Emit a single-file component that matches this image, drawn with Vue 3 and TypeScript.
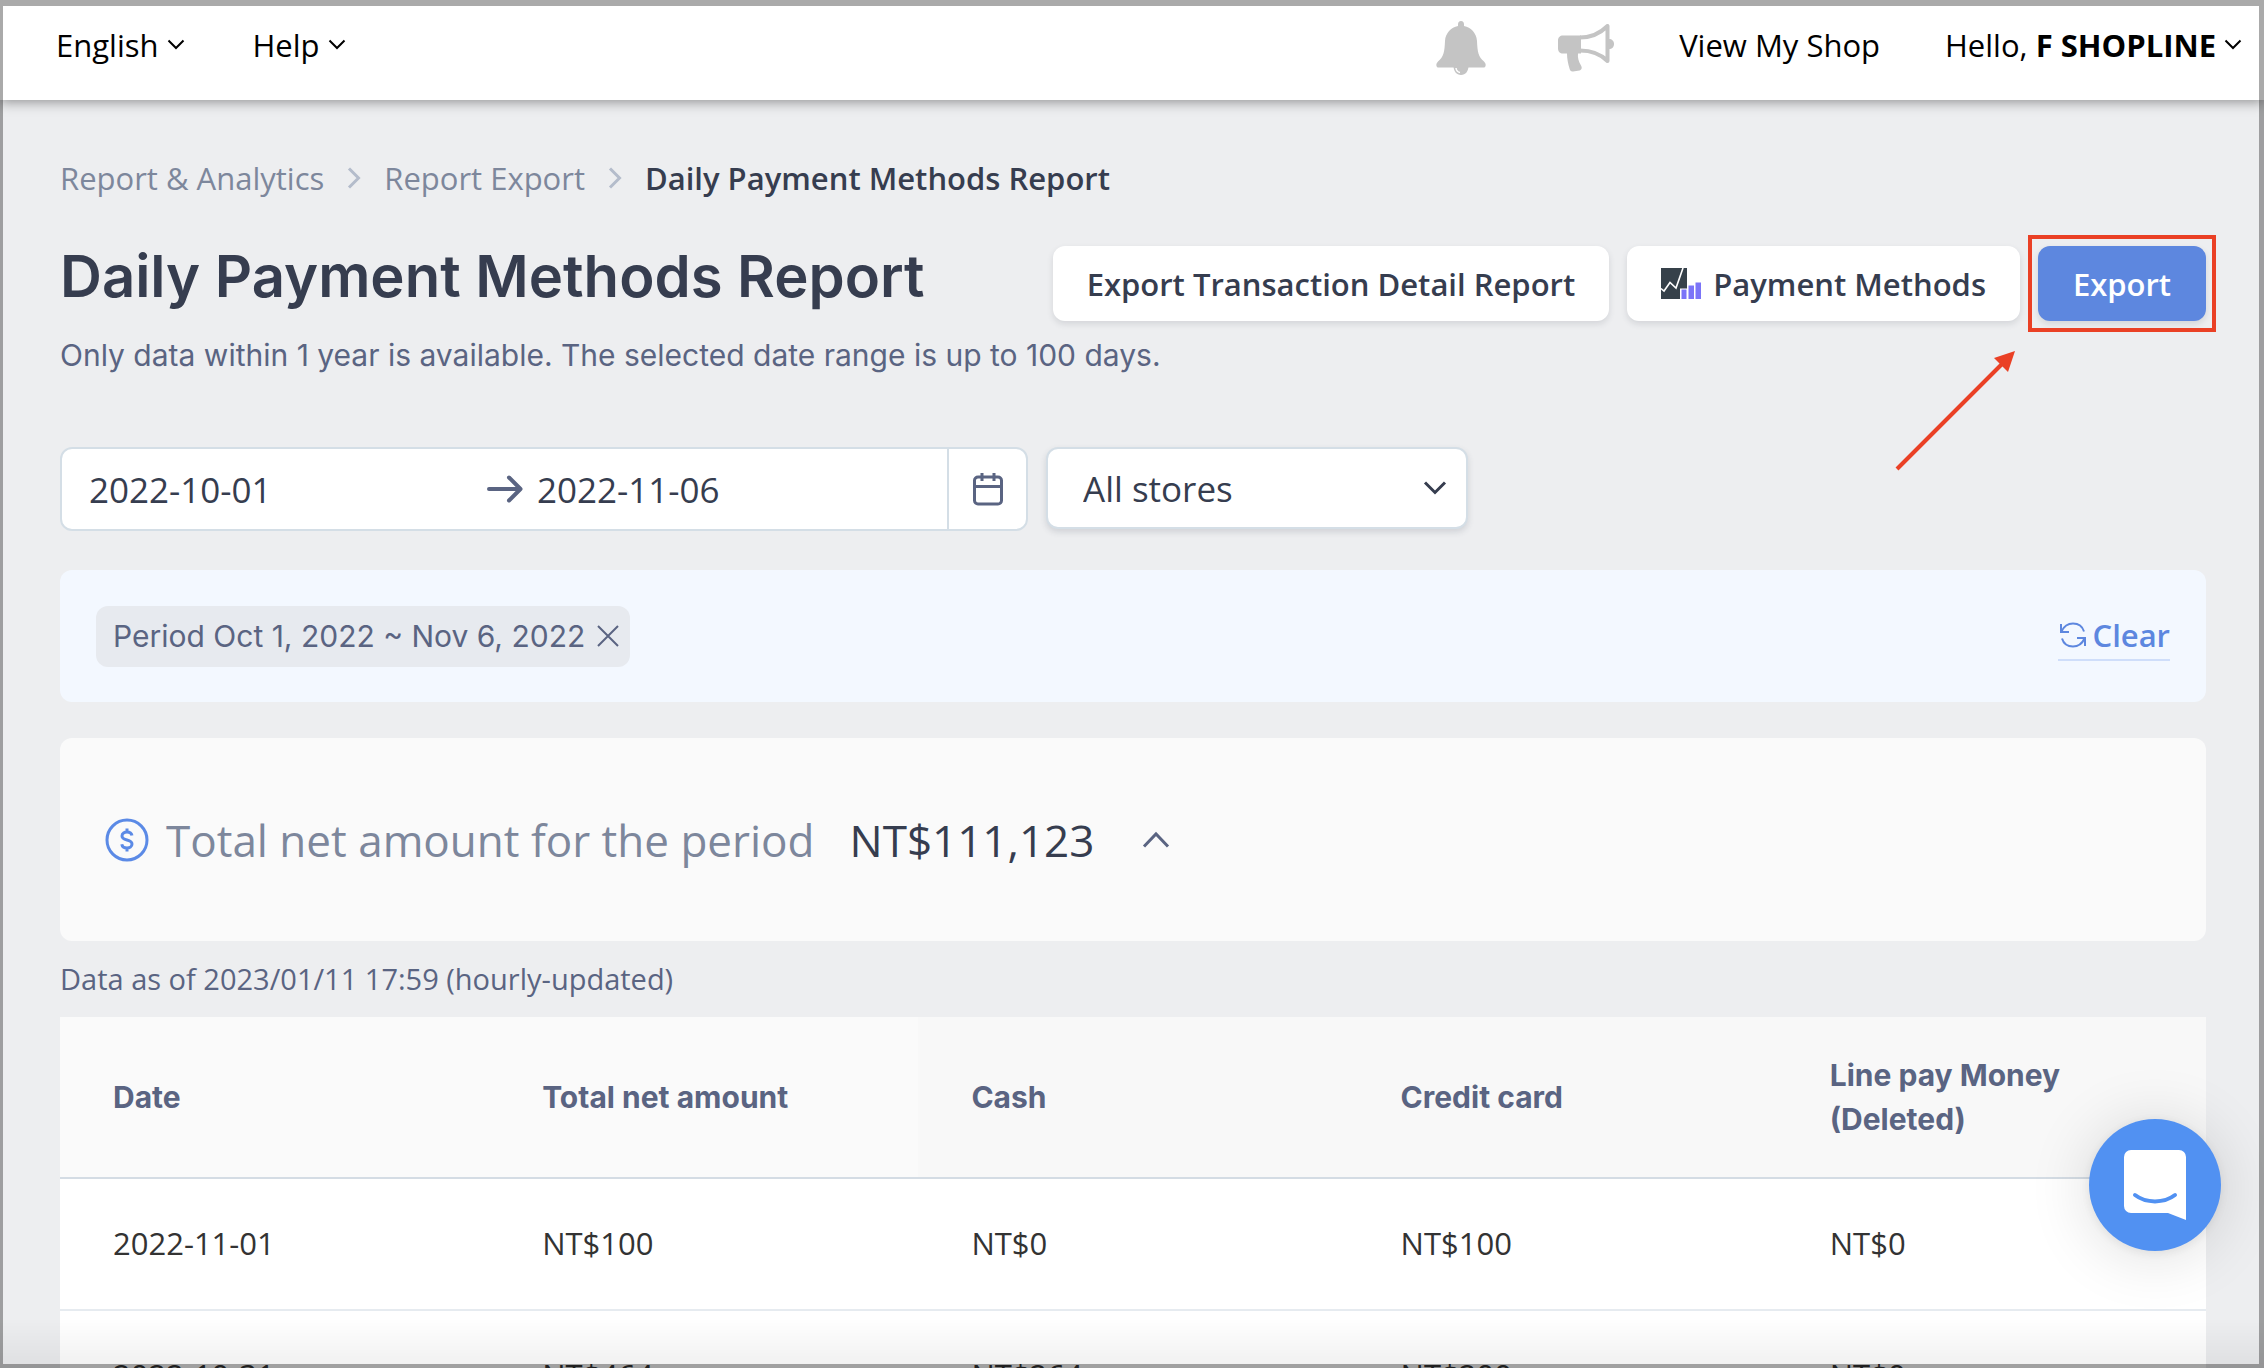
<script setup lang="ts">
import { ref } from 'vue'

interface Row {
  date: string
  total: string
  cash: string
  credit: string
  linePay: string
}

const startDate = ref('2022-10-01')
const endDate = ref('2022-11-06')
const store = ref('all')

const columns = ['Date', 'Total net amount', 'Cash', 'Credit card', 'Line pay Money (Deleted)']

const rows: Row[] = [
  { date: '2022-11-01', total: 'NT$100', cash: 'NT$0', credit: 'NT$100', linePay: 'NT$0' },
  { date: '2022-10-31', total: 'NT$464', cash: 'NT$264', credit: 'NT$200', linePay: 'NT$0' },
]
</script>

<template>
  <div class="page">
    <header class="topbar">
      <nav class="topbar-group left">
        <button type="button" class="menu">
          English
          <svg class="caret" viewBox="0 0 18 12"><path d="M1.5 1.5 9 9l7.5-7.5" /></svg>
        </button>
        <button type="button" class="menu">
          Help
          <svg class="caret" viewBox="0 0 18 12"><path d="M1.5 1.5 9 9l7.5-7.5" /></svg>
        </button>
      </nav>
      <div class="topbar-group">
        <div class="alerts">
          <button type="button" aria-label="Notifications">
            <svg class="bell" viewBox="0 0 50 54">
              <path d="M25 0c2 0 3 1.5 3 3.5V5c7 1.5 12.5 7 13 15 .4 11 1.5 16 7 20.5 1.5 1.5 2 3 1.5 4.5-.3 1-1 1.5-2 1.5h-45c-1 0-1.700-.5-2-1.500-.5-1.500 0-3 1.500-4.500C7.500 36 8.600 31 9 20 9.500 12 15 6.500 22 5V3.500C22 1.500 23 0 25 0z" />
              <path d="M17.500 45h15c0 5-3 9-7.500 9s-7.500-4-7.500-9z" />
              <path d="M20 47c.3 2.500 1.500 4 4 4.500" fill="none" stroke="#fff" stroke-width="1.500" />
            </svg>
          </button>
          <button type="button" aria-label="Announcements">
            <svg class="horn" viewBox="0 0 56 48">
              <path d="M5 11.500h18v18H20c-.5 4 .5 8 3 12 1.500 2.500.5 4.500-1.500 5l-6.500 1c-2 .2-3-.8-3.500-3-1.500-5-2.500-10-2.500-15H5c-3 0-5-2-5-5v-8c0-3 2-5 5-5z" />
              <path d="M22 13.500c12 0 20-4 27.500-11.500v35C42 29.500 34 26.500 22 26.500" fill="none" stroke="#c4c4c4" stroke-width="4" stroke-linejoin="round" />
              <path d="M51 15c3 0 5 2 5 5s-2 5-5 5z" />
            </svg>
          </button>
        </div>
        <a href="#">View My Shop</a>
        <button type="button" class="menu account">
          <span>Hello, <b>F SHOPLINE</b></span>
          <svg class="caret" viewBox="0 0 18 12"><path d="M1.5 1.5 9 9l7.5-7.5" /></svg>
        </button>
      </div>
    </header>

    <main class="content">
      <nav class="breadcrumb" aria-label="Breadcrumb">
        <a href="#">Report &amp; Analytics</a>
        <svg viewBox="0 0 14 22"><path d="M2 1.5 11.5 11 2 20.5" /></svg>
        <a href="#">Report Export</a>
        <svg viewBox="0 0 14 22"><path d="M2 1.5 11.5 11 2 20.5" /></svg>
        <strong>Daily Payment Methods Report</strong>
      </nav>

      <section class="heading">
        <div>
          <h1>Daily Payment Methods Report</h1>
          <p>Only data within 1 year is available. The selected date range is up to 100 days.</p>
        </div>
        <div class="actions">
          <button type="button" class="btn">Export Transaction Detail Report</button>
          <button type="button" class="btn">
            <svg class="chart" viewBox="0 0 40 31">
              <rect width="26" height="31" fill="#36414a" />
              <path d="M0 20.5 3 23l6-8.500 6 5.500L22 0" fill="none" stroke="#fff" stroke-width="1.600" />
              <path d="M19 31V20.500h7V16h7v-3h7v18z" fill="#fff" />
              <path d="M20.500 21.500h5V31h-5zM27.500 17.500H33V31h-5.500zM34.500 14.500H40V31h-5.500z" fill="#7b74f8" />
            </svg>
            Payment Methods
          </button>
          <div class="highlight">
            <button type="button" class="btn primary">Export</button>
            <span class="highlight-box"></span>
            <svg class="highlight-arrow" viewBox="0 0 124 124">
              <path d="M4 120 112 12" stroke="#ea4025" stroke-width="4" />
              <path d="M122 2 101 9l14 14z" fill="#ea4025" />
            </svg>
          </div>
        </div>
      </section>

      <section class="filters">
        <div class="range">
          <input v-model="startDate" type="text" class="start" aria-label="Start date" />
          <svg class="to" viewBox="0 0 36 28"><path d="M2 14h31M22 2.5 33.5 14 22 25.5" /></svg>
          <input v-model="endDate" type="text" class="end" aria-label="End date" />
          <button type="button" class="calendar" aria-label="Open calendar">
            <svg viewBox="0 0 30 34">
              <path d="M5 5h20a3.500 3.500 0 0 1 3.500 3.500v20A3.500 3.500 0 0 1 25 32H5a3.500 3.500 0 0 1-3.500-3.500v-20A3.500 3.500 0 0 1 5 5zM1.500 14.500h27M9 1v8M21 1v8" />
            </svg>
          </button>
        </div>
        <div class="store">
          <select v-model="store" aria-label="Store">
            <option value="all">All stores</option>
          </select>
          <svg viewBox="0 0 24 16"><path d="M2 2.5 12 12.5 22 2.5" /></svg>
        </div>
      </section>

      <section class="applied">
        <span class="chip">
          Period Oct 1, 2022 ~ Nov 6, 2022
          <button type="button" aria-label="Remove period filter">
            <svg viewBox="0 0 22 22"><path d="M1 1l20 20M21 1 1 21" /></svg>
          </button>
        </span>
        <button type="button" class="clear">
          <svg viewBox="0 0 28 28">
            <path d="M2 3v8h8M2.500 10.500C5 5 9 2.500 14 2.500c5.500 0 9.500 3 11 8M26 25v-8h-8M25.500 17.500C23 23 19 25.500 14 25.500c-5.500 0-9.500-3-11-8" />
          </svg>
          Clear
        </button>
      </section>

      <section class="summary">
        <svg class="coin" viewBox="0 0 44 44">
          <circle cx="22" cy="22" r="20" />
          <path d="M27 17.500c-.5-2.500-2.500-3.500-5-3.500s-5 1.200-5 4c0 5.500 10 2.500 10 8 0 2.800-2.500 4-5 4s-4.800-1.200-5.200-3.800M22 10.500V14M22 30v3.500" />
        </svg>
        <span class="summary-label">Total net amount for the period</span>
        <span class="summary-value">NT$111,123</span>
        <button type="button" aria-label="Collapse summary">
          <svg viewBox="0 0 28 18"><path d="M2 15.500 14 3l12 12.500" /></svg>
        </button>
      </section>

      <p class="updated">Data as of 2023/01/11 17:59 (hourly-updated)</p>

      <table>
        <thead>
          <tr>
            <th v-for="name in columns" :key="name" scope="col">{{ name }}</th>
          </tr>
        </thead>
        <tbody>
          <tr v-for="row in rows" :key="row.date">
            <td>{{ row.date }}</td>
            <td>{{ row.total }}</td>
            <td>{{ row.cash }}</td>
            <td>{{ row.credit }}</td>
            <td>{{ row.linePay }}</td>
          </tr>
        </tbody>
      </table>
    </main>

    <div class="fade"></div>
    <button type="button" class="chat" aria-label="Open chat">
      <svg viewBox="0 0 62 70">
        <path d="M7 0h48a7 7 0 0 1 7 7v63L44 63H7a7 7 0 0 1-7-7V7a7 7 0 0 1 7-7z" fill="#fff" />
        <path d="M11 45c11 8.500 29 8.500 40 0" fill="none" stroke="#5191f2" stroke-width="4" stroke-linecap="round" />
      </svg>
    </button>
    <div class="frame"></div>
  </div>
</template>

<style>
body {
  margin: 0;
  background: #edeef0;
}
</style>

<style scoped>
.page {
  height: 100vh;
  overflow: hidden;
  background: #edeef0;
  font-family: 'Open Sans', 'Noto Sans', sans-serif;
  font-size: 31px;
  color: #363d4f;
}
button {
  padding: 0;
  border: 0;
  background: none;
  font: inherit;
  color: inherit;
  cursor: pointer;
}
a {
  color: inherit;
  text-decoration: none;
}
svg {
  display: block;
  flex: none;
  fill: none;
}
.topbar {
  position: relative;
  display: flex;
  justify-content: space-between;
  box-sizing: border-box;
  height: 100px;
  padding: 6px 22px 16px 56px;
  background: #fff;
  color: #000;
  box-shadow: 0 2px 12px rgba(0, 0, 0, 0.4);
}
.topbar-group {
  display: flex;
  align-items: center;
  gap: 65px;
}
.topbar-group.left {
  gap: 68px;
}
.menu {
  display: flex;
  align-items: center;
  gap: 8px;
}
.account b {
  font-weight: 700;
}
.caret {
  width: 18px;
  height: 12px;
  stroke: #000;
  stroke-width: 2;
}
.alerts {
  display: flex;
  align-items: center;
  gap: 72px;
  padding-top: 5px;
}
.bell {
  width: 50px;
  height: 54px;
  fill: #c4c4c4;
}
.horn {
  width: 56px;
  height: 48px;
  fill: #c4c4c4;
}
.content {
  padding: 56px 58px 0 60px;
}
.breadcrumb {
  display: flex;
  align-items: center;
  gap: 23px;
  line-height: 44px;
  color: #7d879c;
}
.breadcrumb svg {
  width: 14px;
  height: 22px;
  stroke: #b4bccb;
  stroke-width: 3;
}
.breadcrumb strong {
  font-weight: 600;
  color: #363d4f;
}
.heading {
  display: flex;
  justify-content: space-between;
  margin-top: 40px;
}
h1 {
  margin: 0;
  font: 600 58px/72px Inter, sans-serif;
  white-space: nowrap;
}
.heading p {
  margin: 21px 0 0;
  font: 400 30px/44px Inter, sans-serif;
  color: #5a6482;
  white-space: nowrap;
}
.heading > div:first-child {
  width: 0;
}
.actions {
  display: flex;
  align-items: flex-start;
  gap: 18px;
  padding-top: 6px;
}
.btn {
  display: flex;
  align-items: center;
  justify-content: center;
  gap: 12px;
  height: 75px;
  padding: 0 34px;
  border-radius: 12px;
  background: #fff;
  font-weight: 600;
  white-space: nowrap;
  box-shadow: 0 3px 6px rgba(54, 61, 79, 0.14);
}
.primary {
  min-width: 168px;
  background: #5d87df;
  color: #fff;
}
.chart {
  width: 40px;
  height: 31px;
}
.highlight {
  position: relative;
}
.highlight-box {
  position: absolute;
  inset: -11px -10px;
  border: 4px solid #ea4025;
  pointer-events: none;
}
.highlight-arrow {
  position: absolute;
  top: 103px;
  left: -145px;
  width: 124px;
  height: 124px;
}
.filters {
  display: flex;
  align-items: flex-start;
  gap: 18px;
  margin-top: 70px;
}
.range {
  display: flex;
  align-items: center;
  box-sizing: border-box;
  width: 968px;
  height: 84px;
  border: 2px solid #d4dee6;
  border-radius: 12px;
  background: #fff;
}
.range input {
  box-sizing: border-box;
  min-width: 0;
  border: 0;
  background: none;
  font: inherit;
  font-size: 35px;
  color: inherit;
  outline: 0;
}
.start {
  width: 425px;
  padding: 0 0 0 27px;
}
.end {
  flex: 1;
  padding: 0 0 0 14px;
}
.to {
  width: 36px;
  height: 28px;
  stroke: #5a6482;
  stroke-width: 4;
  stroke-linecap: round;
  stroke-linejoin: round;
}
.calendar {
  display: grid;
  place-items: center;
  width: 79px;
  height: 80px;
  border-left: 2px solid #d4dee6;
}
.calendar svg {
  width: 30px;
  height: 34px;
  stroke: #5a6482;
  stroke-width: 3;
}
.store {
  position: relative;
  width: 422px;
}
.store select {
  width: 100%;
  height: 82px;
  padding: 0 60px 0 35px;
  border: 2px solid #d4dee6;
  border-radius: 12px;
  background: #fff;
  font: inherit;
  font-size: 35px;
  color: inherit;
  appearance: none;
  box-shadow: 0 3px 6px rgba(54, 61, 79, 0.16);
}
.store svg {
  position: absolute;
  top: 33px;
  right: 21px;
  width: 24px;
  height: 16px;
  stroke: #363d4f;
  stroke-width: 3;
  pointer-events: none;
}
.applied {
  display: flex;
  align-items: center;
  justify-content: space-between;
  height: 132px;
  margin-top: 39px;
  padding: 0 36px;
  border-radius: 12px;
  background: #f3f8ff;
}
.chip {
  display: flex;
  align-items: center;
  gap: 12px;
  height: 61px;
  padding: 0 11px 0 17px;
  border-radius: 12px;
  background: #e7eaef;
  font-family: Inter, sans-serif;
  font-size: 30px;
  color: #5a6482;
}
.chip svg {
  width: 22px;
  height: 22px;
  stroke: #5a6482;
  stroke-width: 2;
}
.clear {
  display: flex;
  align-items: center;
  gap: 5px;
  padding-left: 1px;
  border-bottom: 2px solid #cfdefa;
  font-weight: 600;
  line-height: 48px;
  color: #5d87df;
}
.clear svg {
  width: 28px;
  height: 28px;
  stroke: #5d87df;
  stroke-width: 2;
}
.summary {
  display: flex;
  align-items: center;
  height: 203px;
  margin-top: 36px;
  padding: 0 45px;
  border-radius: 12px;
  background: #fafafa;
  font-size: 44px;
}
.coin {
  width: 44px;
  height: 44px;
  stroke: #5b8ae6;
  stroke-width: 3;
}
.summary-label {
  margin-left: 17px;
  color: #7d879c;
}
.summary-value {
  margin-left: 35px;
}
.summary button {
  margin-left: 48px;
}
.summary button svg {
  width: 28px;
  height: 18px;
  stroke: #5a6482;
  stroke-width: 3;
}
.updated {
  margin: 18px 0;
  font-size: 29px;
  line-height: 40px;
  color: #5a6482;
}
table {
  width: 100%;
  table-layout: fixed;
  border-collapse: separate;
  border-spacing: 0;
  background: #fff;
}
th,
td {
  box-sizing: border-box;
  padding: 0 53px;
  text-align: left;
}
th {
  height: 162px;
  border-bottom: 2px solid #d4dce4;
  background: #f8f8f8;
  font-family: Inter, sans-serif;
  font-weight: 700;
  font-size: 30px;
  line-height: 44px;
  color: #5a6482;
}
th:nth-child(-n + 2) {
  background: #fafafa;
}
td {
  height: 132px;
  padding-bottom: 2px;
  border-bottom: 2px solid #e6ebf0;
  color: #333;
}
.fade {
  position: fixed;
  right: 0;
  bottom: 0;
  left: 0;
  height: 50px;
  background: linear-gradient(rgba(0, 0, 0, 0), rgba(0, 0, 0, 0.06));
  pointer-events: none;
}
.chat {
  position: fixed;
  right: 43px;
  bottom: 117px;
  display: grid;
  place-items: center;
  width: 132px;
  height: 132px;
  border-radius: 50%;
  background: #5191f2;
  box-shadow: 0 2px 12px rgba(0, 0, 0, 0.08), 0 4px 64px rgba(0, 0, 0, 0.14);
}
.chat svg {
  width: 62px;
  height: 70px;
}
.frame {
  position: fixed;
  inset: 0;
  border: solid rgba(0, 0, 0, 0.335);
  border-width: 6px 5px 4px 3px;
  pointer-events: none;
}
</style>
